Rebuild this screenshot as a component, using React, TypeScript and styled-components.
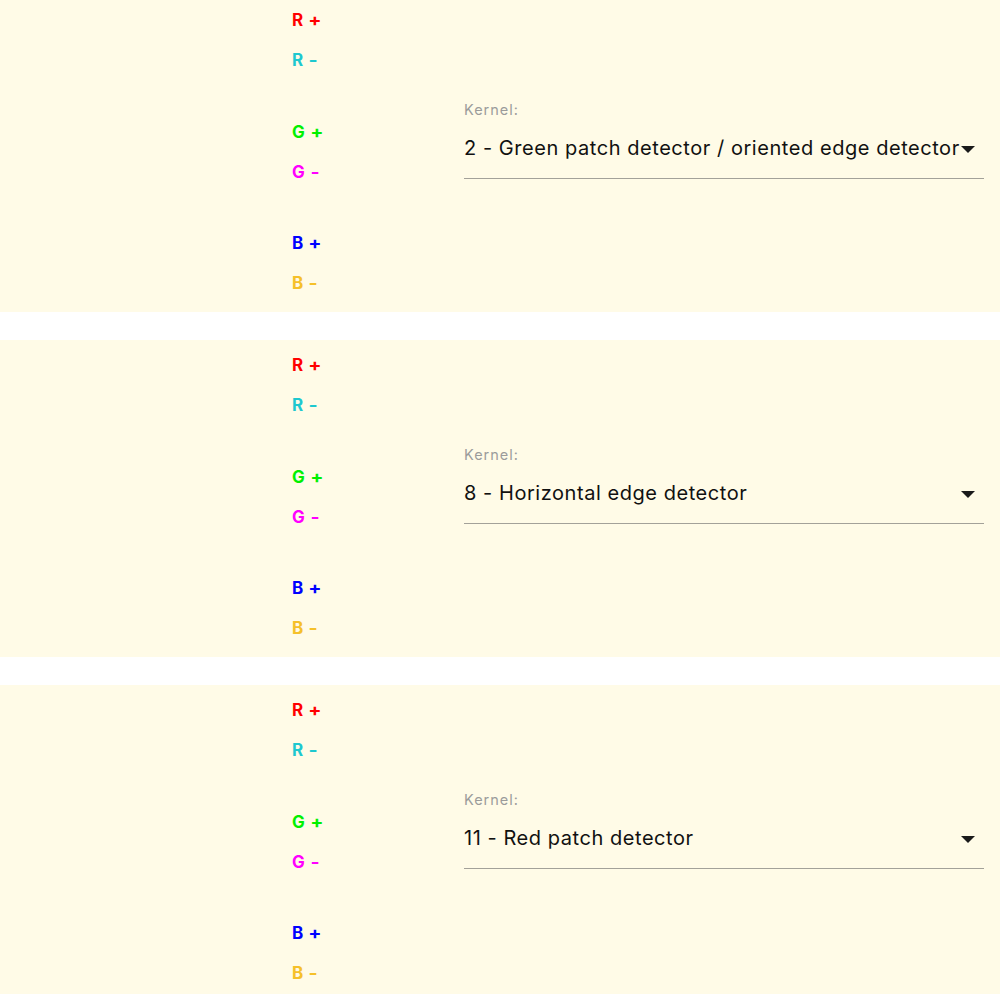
import styled, { createGlobalStyle } from "styled-components";

const GlobalStyle = createGlobalStyle`
  html, body {
    margin: 0;
    padding: 0;
    background: #ffffff;
  }
  body {
    font-family: Inter, "Liberation Sans", Arial, sans-serif;
    overflow: hidden;
  }
`;

const Page = styled.div`
  display: flex;
  flex-direction: column;
  gap: 28px;
  margin-top: -5px;
`;

const Panel = styled.section`
  display: grid;
  grid-template-columns: 172px 1fr;
  height: 317px;
  box-sizing: border-box;
  padding: 5px 16px 9px 292px;
  background: #fffbe7;
`;

const Channels = styled.div`
  display: flex;
  flex-direction: column;
  gap: 31.5px;
`;

const ChannelGroup = styled.div`
  display: flex;
  flex-direction: column;
`;

const Channel = styled.div<{ $color: string }>`
  height: 40px;
  display: flex;
  align-items: center;
  gap: 6px;
  font-size: 17px;
  font-weight: 700;
  color: ${(p) => p.$color};
`;

const Sign = styled.span`
  display: inline-block;
  transform: scaleX(1.15);
`;

const Field = styled.div`
  display: flex;
  flex-direction: column;
  margin-top: 101px;
  min-width: 0;
`;

const FieldLabel = styled.label`
  height: 18px;
  line-height: 18px;
  font-size: 14.5px;
  letter-spacing: 1px;
  color: #9b9b9b;
`;

const SelectBox = styled.div`
  display: flex;
  align-items: center;
  margin-top: 17px;
  padding-bottom: 18px;
  border-bottom: 1px solid #a3a199;
`;

const SelectValue = styled.span`
  flex: 1;
  min-width: 0;
  height: 24px;
  line-height: 24px;
  font-size: 20px;
  letter-spacing: 0.55px;
  color: #111;
  white-space: nowrap;
  overflow: hidden;
`;

const Arrow = styled.svg`
  flex-shrink: 0;
  width: 14px;
  height: 7px;
  margin: 2px 9px 0 0;
`;

type Group = { label: string; color: string }[];

const groups: Group[] = [
  [
    { label: "R", color: "#ff0000" },
    { label: "R", color: "#1ec8cf" },
  ],
  [
    { label: "G", color: "#00f000" },
    { label: "G", color: "#ff00ff" },
  ],
  [
    { label: "B", color: "#0000ff" },
    { label: "B", color: "#f5c02a" },
  ],
];

const kernels = [
  "2 - Green patch detector / oriented edge detector",
  "8 - Horizontal edge detector",
  "11 - Red patch detector",
];

function KernelPanel({ kernel }: { kernel: string }) {
  return (
    <Panel>
      <Channels>
        {groups.map((g, gi) => (
          <ChannelGroup key={gi}>
            {g.map((c, ci) => (
              <Channel key={ci} $color={c.color}>
                <span>{c.label}</span>
                <Sign>{ci === 0 ? "+" : "-"}</Sign>
              </Channel>
            ))}
          </ChannelGroup>
        ))}
      </Channels>
      <Field>
        <FieldLabel>Kernel:</FieldLabel>
        <SelectBox>
          <SelectValue>{kernel}</SelectValue>
          <Arrow viewBox="0 0 14 7">
            <path d="M0 0h14L7 7z" fill="#1a1a1a" />
          </Arrow>
        </SelectBox>
      </Field>
    </Panel>
  );
}

export default function App() {
  return (
    <>
      <GlobalStyle />
      <Page>
        {kernels.map((k) => (
          <KernelPanel key={k} kernel={k} />
        ))}
      </Page>
    </>
  );
}
